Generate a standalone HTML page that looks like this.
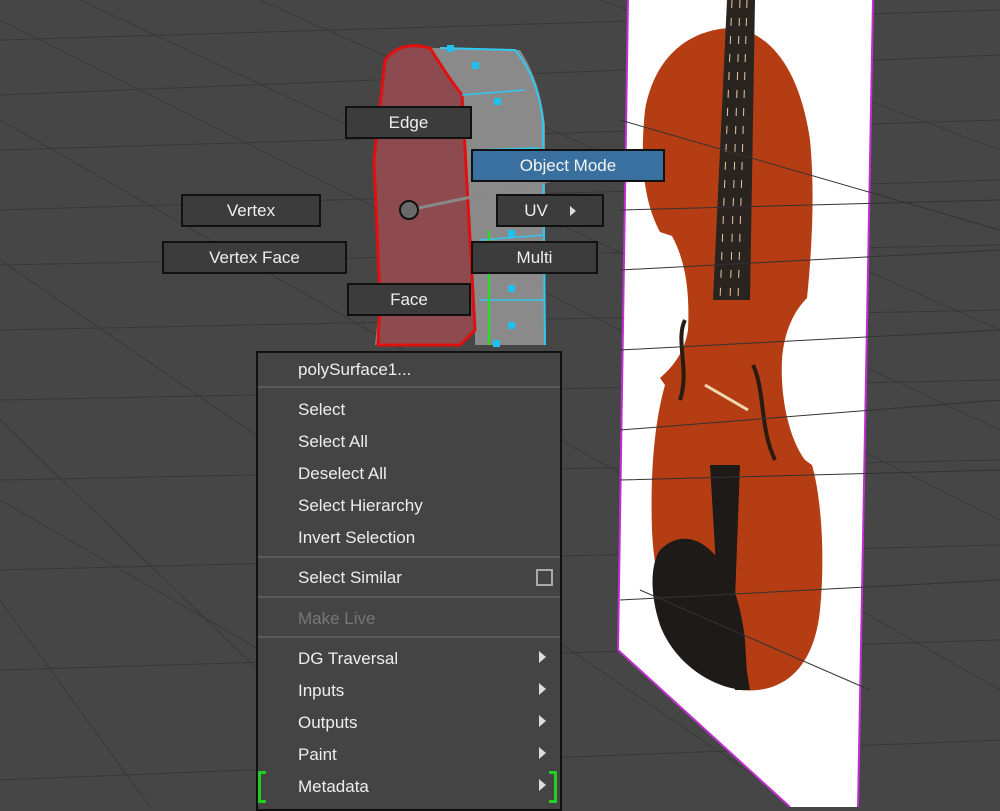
<!DOCTYPE html>
<html><head><meta charset="utf-8"><style>
html,body{margin:0;padding:0;background:#464646;width:1000px;height:807px;overflow:hidden;font-family:"Liberation Sans",sans-serif}
.b{position:absolute;background:#3c3c3c;border:2px solid #111;color:#eee;font-size:17px;text-align:center;box-sizing:border-box;line-height:29px}
#menu{position:absolute;left:256px;top:351px;width:306px;height:460px;background:#444;border:2px solid #111;box-sizing:border-box;color:#eee;font-size:17px}
#menu .i{position:absolute;left:40px}
#menu .s{position:absolute;left:0;right:0;height:2px;background:#5a5a5a}
#menu .a{position:absolute;left:281px;width:0;height:0;border-left:7px solid #ddd;border-top:6px solid transparent;border-bottom:6px solid transparent}
</style></head><body>
<svg width="1000" height="807" style="position:absolute;left:0;top:0">
<g stroke="#383838" stroke-width="1" fill="none">
<path d="M0 40 L1000 10M0 95 L1000 55M0 150 L1000 120M0 210 L1000 180M0 265 L1000 245M0 330 L1000 310M0 400 L1000 380M0 480 L1000 460M0 570 L1000 545M0 670 L1000 640M0 780 L1000 740"/>
<path d="M0 20 L1000 520M0 120 L1000 690M0 260 L800 807M80 0 L1000 430M260 0 L1000 330M0 420 L400 807M0 600 L150 807M600 0 L1000 150M0 500 L260 650"/>
</g>
<polygon points="628,0 873,0 858,807 790,807 618,650" fill="#fff"/>
<path d="M628 0 L618 650 L790 807" stroke="#c030d0" stroke-width="2" fill="none"/>
<path d="M873 0 L858 807" stroke="#c030d0" stroke-width="2" fill="none"/>
<path d="M730 28 C690 30 655 55 645 110 C640 160 643 200 660 232 L672 236 C685 260 690 290 688 330 C685 350 675 365 660 378 L665 385 C655 420 650 470 652 530 C655 600 680 670 740 690 C790 695 815 660 820 610 C825 560 822 500 812 465 L805 460 C790 440 780 400 782 360 C784 330 795 310 807 298 C812 250 815 190 810 140 C800 70 770 30 730 28Z" fill="#b53d14"/>
<path d="M727 0 L755 0 L750 300 L713 300Z" fill="#2a2420"/>
<g stroke="#e8c8a0" stroke-width="1" stroke-dasharray="8 10"><path d="M732 0 L720 300M740 0 L730 300M747 0 L738 300"/></g>
<path d="M685 320 C675 340 690 370 680 400 M753 365 C765 390 760 430 775 460" stroke="#2a1a10" stroke-width="4" fill="none"/>
<path d="M660 550 C690 520 735 550 745 640 L748 690 C715 690 675 665 660 625 C650 595 650 565 660 550Z" fill="#1e1a18"/>
<path d="M710 465 L740 465 L735 600 L750 690 L735 690 L718 600Z" fill="#1e1a18"/>
<path d="M705 385 L748 410" stroke="#f0d8b0" stroke-width="3"/>
<g stroke="#333" stroke-width="1" fill="none">
<path d="M620 120 L1000 230M620 210 L1000 200M620 270 L1000 250M620 350 L1000 330M620 430 L1000 400M620 480 L1000 470M620 600 L1000 580M640 590 L870 690"/>
</g>
<path d="M385 60 Q395 45 435 48 L440 48 L520 50 Q540 80 545 125 L545 345 L475 345 L475 330 L445 345 L375 345 L380 300 L375 160 Z" fill="#8a8a8a"/>
<path d="M385 60 Q400 40 430 48 Q450 80 462 95 L475 330 L460 345 L378 345 L380 300 L374 160 Z" fill="#8e4b4f" stroke="#e01010" stroke-width="3"/>
<path d="M440 48 L515 50 Q540 80 543 125 L545 345" stroke="#30c8f0" stroke-width="2" fill="none"/>
<path d="M462 95 L525 90M470 150 L540 148M480 240 L545 235M480 300 L545 300" stroke="#30c8f0" stroke-width="1.5"/>
<g fill="#20c0f0"><rect x="447" y="45" width="7" height="7"/><rect x="472" y="62" width="7" height="7"/><rect x="494" y="98" width="7" height="7"/><rect x="508" y="230" width="7" height="7"/><rect x="508" y="285" width="7" height="7"/><rect x="508" y="322" width="7" height="7"/><rect x="493" y="340" width="7" height="7"/></g>
<path d="M489 230 L489 345" stroke="#20e020" stroke-width="2"/>
<path d="M409 210 L625 165" stroke="#888" stroke-width="3"/>
<circle cx="409" cy="210" r="9" fill="#6a6a6a" stroke="#111" stroke-width="2"/>
</svg>
<div class="b" style="left:345px;top:106px;width:127px;height:33px">Edge</div>
<div class="b" style="left:471px;top:149px;width:194px;height:33px;background:#3a70a0;color:#f4f4f4">Object Mode</div>
<div class="b" style="left:181px;top:194px;width:140px;height:33px">Vertex</div>
<div class="b" style="left:496px;top:194px;width:108px;height:33px">UV<span style="display:inline-block;margin-left:22px;border-left:6px solid #ddd;border-top:5px solid transparent;border-bottom:5px solid transparent"></span></div>
<div class="b" style="left:162px;top:241px;width:185px;height:33px">Vertex Face</div>
<div class="b" style="left:471px;top:241px;width:127px;height:33px">Multi</div>
<div class="b" style="left:347px;top:283px;width:124px;height:33px">Face</div>
<div id="menu">
<div class="i" style="top:7px">polySurface1...</div>
<div class="s" style="top:33px"></div>
<div class="i" style="top:47px">Select</div>
<div class="i" style="top:79px">Select All</div>
<div class="i" style="top:111px">Deselect All</div>
<div class="i" style="top:143px">Select Hierarchy</div>
<div class="i" style="top:175px">Invert Selection</div>
<div class="s" style="top:203px"></div>
<div class="i" style="top:215px">Select Similar</div>
<div style="position:absolute;left:278px;top:216px;width:13px;height:13px;border:2px solid #aaa"></div>
<div class="s" style="top:243px"></div>
<div class="i" style="top:256px;color:#777">Make Live</div>
<div class="s" style="top:283px"></div>
<div class="i" style="top:296px">DG Traversal</div><div class="a" style="top:298px"></div>
<div class="i" style="top:328px">Inputs</div><div class="a" style="top:330px"></div>
<div class="i" style="top:360px">Outputs</div><div class="a" style="top:362px"></div>
<div class="i" style="top:392px">Paint</div><div class="a" style="top:394px"></div>
<div class="i" style="top:424px">Metadata</div><div class="a" style="top:426px"></div>
<div style="position:absolute;left:0;top:418px;width:5px;height:26px;border:3px solid #20d020;border-right:none"></div>
<div style="position:absolute;left:291px;top:418px;width:5px;height:26px;border:3px solid #20d020;border-left:none"></div>
</div>
</body></html>
